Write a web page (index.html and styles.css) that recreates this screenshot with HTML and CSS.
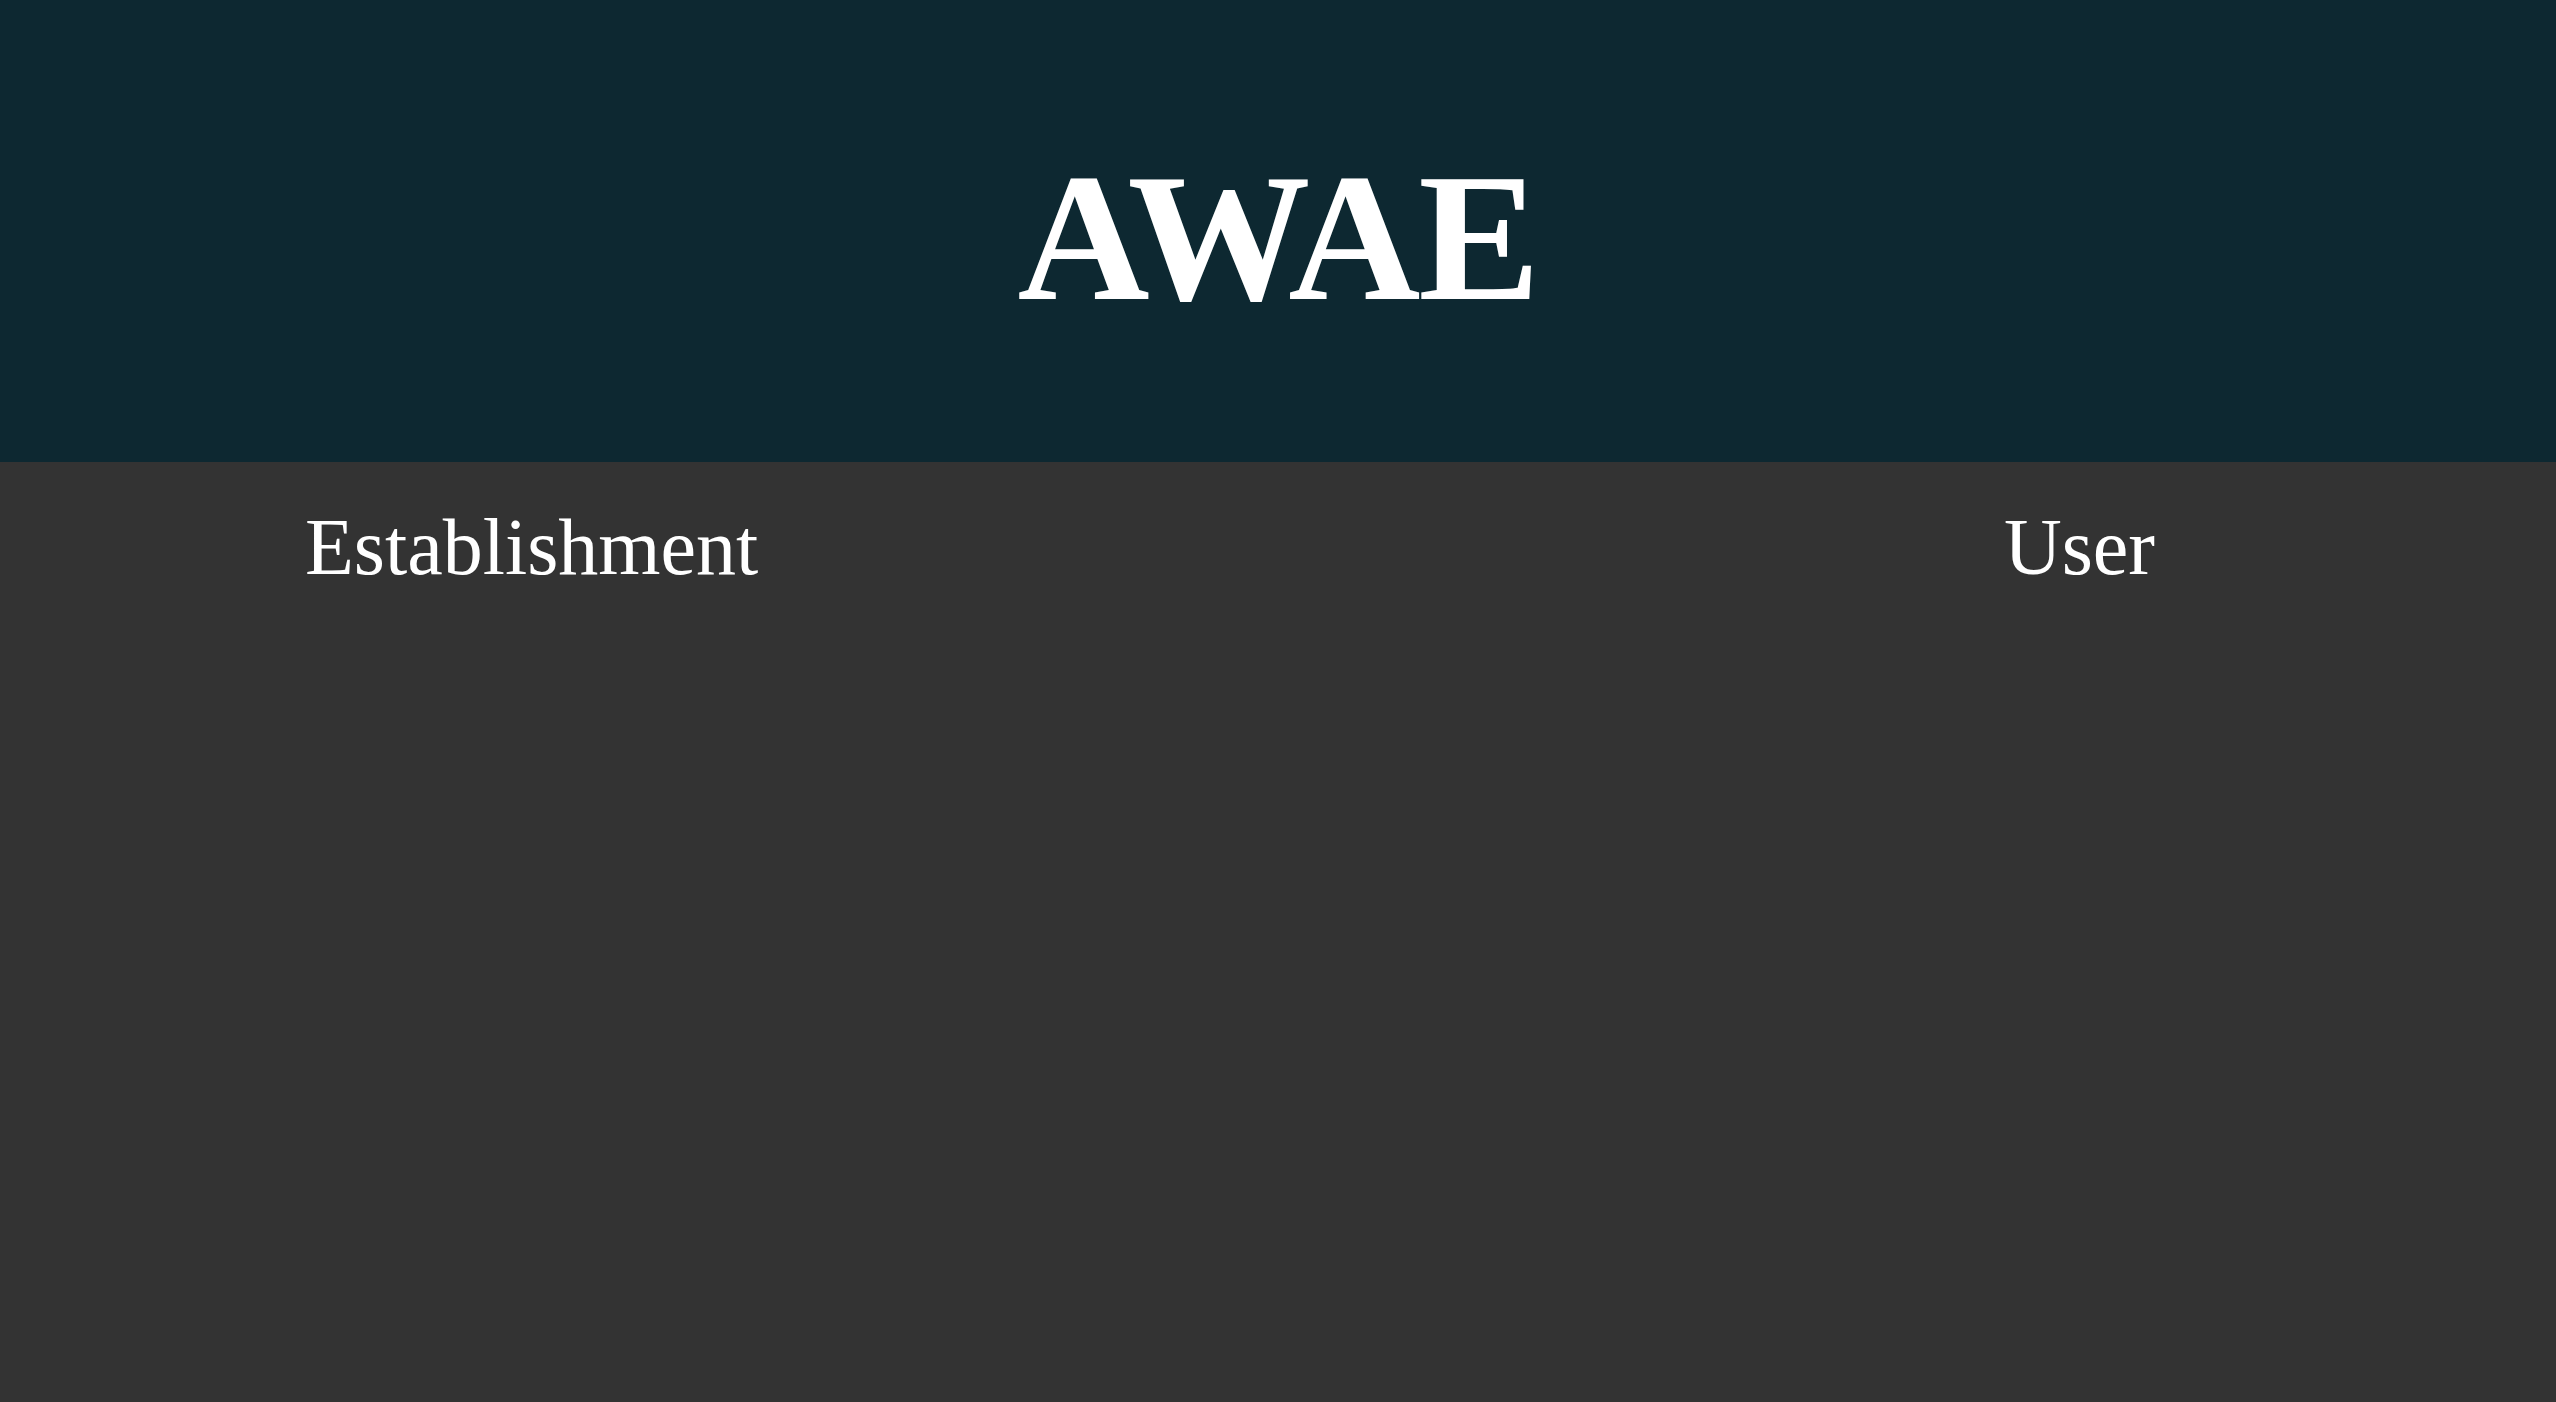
FILE: index.html
```html
<!DOCTYPE html>
<html lang="en">
<head>
<meta charset="utf-8">
<title>AWAE</title>
<link rel="stylesheet" href="styles.css">
</head>
<body>
<header class="masthead">
  <h1 class="title">AWAE</h1>
</header>
<main class="content">
  <nav class="choices">
    <a class="choice" href="#">Establishment</a>
    <a class="choice" href="#">User</a>
  </nav>
</main>
</body>
</html>
```

FILE: styles.css
```css
html, body {
  margin: 0;
  padding: 0;
  height: 100%;
}
body {
  background: #333333;
  font-family: "Liberation Serif", "Times New Roman", serif;
  color: #ffffff;
}
.masthead {
  background: #0d2831;
  height: 462px;
  display: flex;
  justify-content: center;
  align-items: flex-start;
}
.title {
  margin: 0;
  padding-top: 146px;
  font-size: 183px;
  font-weight: bold;
  line-height: 1;
  letter-spacing: -2px;
}
.content {
  padding: 0;
}
.choices {
  display: flex;
  justify-content: space-between;
  padding: 45px 401px 0 305px;
}
.choice {
  color: #ffffff;
  text-decoration: none;
  font-size: 80px;
  line-height: 1;
}
```
